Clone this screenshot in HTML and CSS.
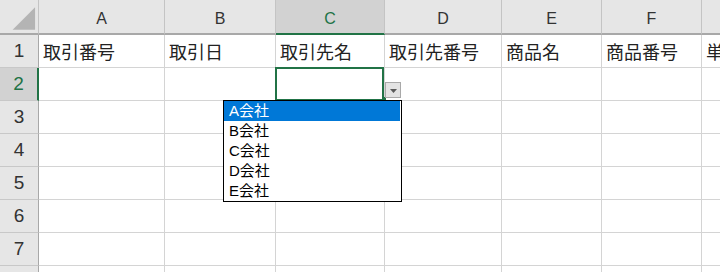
FILE: index.html
```html
<!DOCTYPE html>
<html lang="ja">
<head>
    <meta charset="UTF-8">
    <meta name="viewport" content="width=device-width, initial-scale=1.0">
    <title>Sheet1 - 入力規則</title>
    <link rel="stylesheet" href="styles.css">
</head>
<body>
    <div class="sheet">
        <div class="grid" id="grid">
            <!-- cells are built by the script below -->
        </div>

        <!-- active cell C2 with its list button -->
        <div class="selection"></div>
        <div class="fill-handle"></div>
        <div class="dd-btn">
            <svg width="7" height="4" viewBox="0 0 7 4"><path d="M0 0h7L3.5 4z" fill="#5a5a5a"/></svg>
        </div>

        <ul class="dd-list">
            <li class="active">A会社</li>
            <li>B会社</li>
            <li>C会社</li>
            <li>D会社</li>
            <li>E会社</li>
        </ul>
    </div>

    <script>
        const grid = document.getElementById("grid");
        const letters = ["A", "B", "C", "D", "E", "F", "G"];
        const headers = ["取引番号", "取引日", "取引先名", "取引先番号", "商品名", "商品番号", "単価"];
        const activeCol = 2;
        const activeRow = 2;

        function cell(cls, text) {
            const div = document.createElement("div");
            div.className = cls;
            div.textContent = text || "";
            grid.appendChild(div);
        }

        // Column headers
        cell("corner", "");
        grid.lastChild.innerHTML = '<svg width="39" height="33" viewBox="0 0 39 33"><path d="M13 30H36V7z" fill="#b4b4b4"/></svg>';
        letters.forEach((l, i) => cell(i === activeCol ? "col-head on" : "col-head", l));

        // Rows
        for (let r = 1; r <= 8; r++) {
            cell(r === activeRow ? "row-head on" : "row-head", r);
            letters.forEach((l, i) => cell("cell", r === 1 ? headers[i] : ""));
        }
    </script>
</body>
</html>
```

FILE: styles.css
```css
/* General */
body {
    margin: 0;
    padding: 0;
    background-color: #fff;
    overflow: hidden;
    font-family: "Noto Sans CJK JP", sans-serif;
    color: #222;
}

.sheet {
    position: relative;
    width: 720px;
    height: 272px;
    overflow: hidden;
}

.grid {
    display: grid;
    grid-template-columns: 39px 126px 111px 109px 117px 100px 100px 100px;
    grid-template-rows: 35px;
    grid-auto-rows: 33px;
}

.grid > div {
    box-sizing: border-box;
    display: flex;
    align-items: center;
}

/* Headers */
.corner {
    background-color: #e6e6e6;
    border-right: 1px solid #c4c4c4;
    border-bottom: 2px solid #a8a8a8;
}

.corner svg {
    display: block;
}

.col-head {
    justify-content: center;
    padding-top: 5px;
    background-color: #e6e6e6;
    border-right: 1px solid #c4c4c4;
    border-bottom: 2px solid #a8a8a8;
    font-family: "Liberation Sans", sans-serif;
    font-size: 16px;
    color: #333;
}

.row-head {
    justify-content: center;
    background-color: #e6e6e6;
    border-right: 1px solid #a8a8a8;
    border-bottom: 1px solid #c8c8c8;
    font-family: "Liberation Sans", sans-serif;
    font-size: 19px;
    color: #333;
}

.col-head.on {
    background-color: #d2d2d2;
    border-bottom-color: #217346;
    color: #217346;
}

.row-head.on {
    background-color: #d2d2d2;
    border-right: 2px solid #217346;
    color: #217346;
}

/* Cells */
.cell {
    padding-left: 4px;
    border-right: 1px solid #d4d4d4;
    border-bottom: 1px solid #d4d4d4;
    font-size: 18px;
    white-space: nowrap;
    overflow: hidden;
}

/* Active cell */
.selection {
    position: absolute;
    left: 275px;
    top: 67px;
    width: 109px;
    height: 34px;
    box-sizing: border-box;
    border: 2px solid #217346;
}

.fill-handle {
    position: absolute;
    left: 382px;
    top: 97px;
    width: 4px;
    height: 4px;
    background-color: #217346;
}

.dd-btn {
    position: absolute;
    left: 385px;
    top: 82px;
    width: 16px;
    height: 16px;
    box-sizing: border-box;
    border: 1px solid #a9a9a9;
    background-color: #e3e3e3;
    display: flex;
    align-items: center;
    justify-content: center;
    padding-top: 1px;
}

.dd-btn svg {
    display: block;
}

/* Drop-down list */
.dd-list {
    position: absolute;
    left: 223px;
    top: 100px;
    width: 179px;
    box-sizing: border-box;
    margin: 0;
    padding: 0 1px 0 0;
    list-style: none;
    background-color: #fff;
    border: 1px solid #000;
    font-family: "Liberation Sans", "Noto Sans CJK JP", sans-serif;
    font-size: 15px;
    color: #000;
}

.dd-list li {
    height: 20px;
    line-height: 20px;
    padding-left: 5px;
}

.dd-list li.active {
    background-color: #0078d7;
    color: #fff;
}
```
